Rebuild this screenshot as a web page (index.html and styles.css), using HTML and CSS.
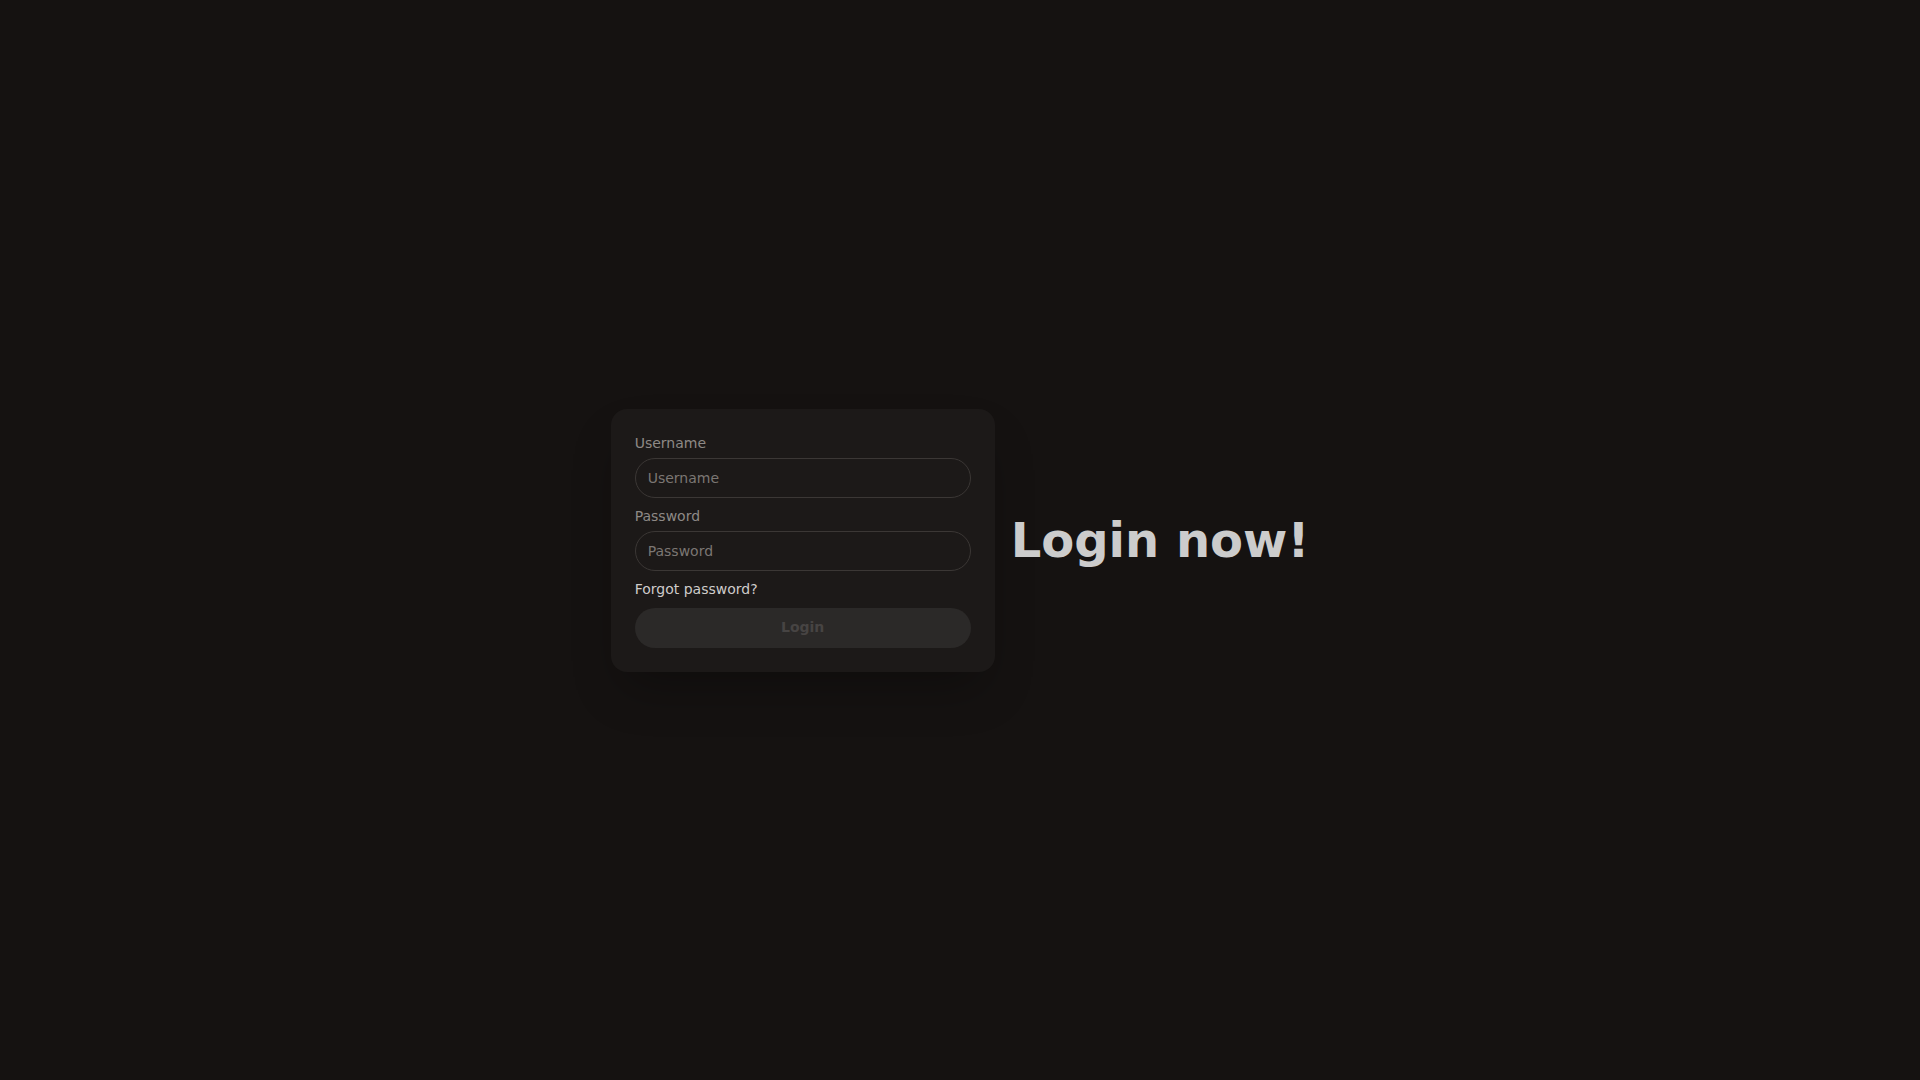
FILE: index.html
```html
<!DOCTYPE html>
<html lang="en">
<head>
<meta charset="utf-8">
<title>Login</title>
<link rel="stylesheet" href="styles.css">
</head>
<body>
<div class="hero">
  <div class="hero-content">
    <div class="hero-text">
      <h1 class="title">Login now!</h1>
    </div>
    <div class="card">
      <form class="card-body">
        <label class="label" for="username">Username</label>
        <input class="input" id="username" type="text" placeholder="Username">
        <label class="label label-gap" for="password">Password</label>
        <input class="input" id="password" type="password" placeholder="Password">
        <a class="link" href="#">Forgot password?</a>
        <button class="btn" type="button" disabled>Login</button>
      </form>
    </div>
  </div>
</div>
</body>
</html>
```

FILE: styles.css
```css
* { box-sizing: border-box; }
html, body { margin: 0; padding: 0; }
body {
  background: #151211;
  font-family: "DejaVu Sans", sans-serif;
  color: #cfcac7;
}
.hero {
  min-height: 100vh;
  display: flex;
  align-items: center;
  justify-content: center;
}
.hero-content {
  display: flex;
  flex-direction: row-reverse;
  align-items: center;
  gap: 16px;
}
.title {
  margin: 0;
  font-size: 48px;
  line-height: 1;
  font-weight: 700;
  color: #cccccc;
}
.card {
  width: 384px;
  background: #1c1918;
  border-radius: 16px;
  box-shadow: 0 25px 50px -12px rgba(0, 0, 0, 0.3);
}
.card-body {
  display: flex;
  flex-direction: column;
  padding: 24px;
  margin: 0;
}
.label {
  font-size: 14px;
  line-height: 20px;
  color: #8e8986;
  margin-bottom: 5px;
}
.label-gap { margin-top: 8px; }
.input {
  height: 40px;
  width: 100%;
  border: 1px solid #3b3735;
  border-radius: 20px;
  background: #1c1918;
  padding: 0 12px;
  font-family: "DejaVu Sans", sans-serif;
  font-size: 14px;
  color: #cfcac7;
  outline: none;
}
.input::placeholder { color: #7b7673; }
.link {
  margin-top: 8px;
  font-size: 14px;
  line-height: 20px;
  color: #cfcccb;
  text-decoration: none;
  align-self: flex-start;
}
.btn {
  margin-top: 9px;
  height: 40px;
  width: 100%;
  border: none;
  border-radius: 20px;
  background: #2b2928;
  color: #474443;
  font-family: "DejaVu Sans", sans-serif;
  font-size: 14px;
  font-weight: 700;
  padding: 0 16px 1px;
}
```
